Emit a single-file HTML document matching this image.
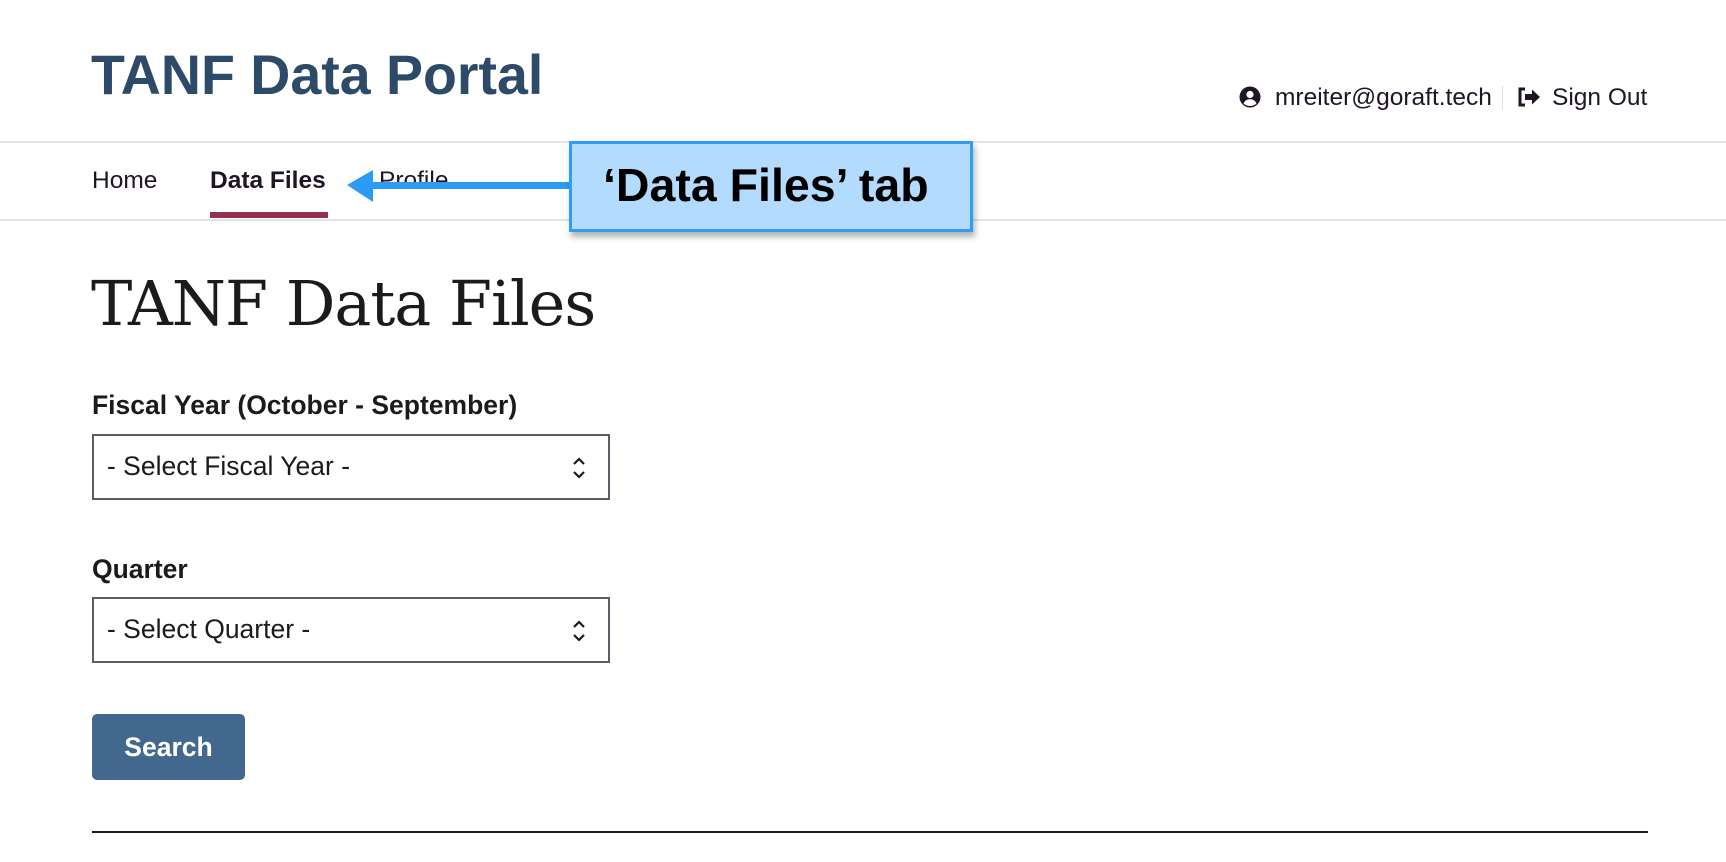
<!DOCTYPE html>
<html><head><meta charset="utf-8"><style>
body{margin:0;width:1726px;height:862px;background:#fff;position:relative;overflow:hidden;font-family:"Liberation Sans",Arial,sans-serif;color:#1b1b1b}
.a{position:absolute;white-space:nowrap}
</style></head><body>
<div class="a" style="left:91px;top:43px;font-size:55.5px;font-weight:bold;color:#2d4a68;line-height:64px">TANF Data Portal</div>
<svg class="a" style="left:1239px;top:86px" width="22" height="22" viewBox="0 0 22 22"><circle cx="11" cy="11" r="10.5" fill="#1f1525"/><circle cx="11" cy="8.5" r="3.6" fill="#fff"/><path d="M4.5 17.5c1.5-3 3.8-4.2 6.5-4.2s5 1.2 6.5 4.2c-1.8 1.6-4 2.5-6.5 2.5s-4.7-.9-6.5-2.5z" fill="#fff"/></svg>
<div class="a" style="left:1275px;top:83px;font-size:24.5px;color:#1f1525;line-height:30px">mreiter@goraft.tech</div>
<div class="a" style="left:1502px;top:86px;width:1px;height:24px;background:#ddd"></div>
<svg class="a" style="left:1516px;top:86px" width="26" height="22" viewBox="0 0 26 22"><path d="M9 3H4v16h5" fill="none" stroke="#1f1525" stroke-width="3"/><path d="M9 8h7V3.5l8 7.5-8 7.5V14H9z" fill="#1f1525"/></svg>
<div class="a" style="left:1552px;top:83px;font-size:24.5px;color:#1f1525;line-height:30px">Sign Out</div>
<div class="a" style="left:0;top:141px;width:1726px;height:2px;background:#e4e4e4"></div>
<div class="a" style="left:0;top:219px;width:1726px;height:2px;background:#e4e4e4"></div>
<div class="a" style="left:92px;top:166px;font-size:24.5px;color:#1f1525;line-height:30px">Home</div>
<div class="a" style="left:210px;top:166px;font-size:24.5px;font-weight:bold;color:#1f1525;line-height:30px">Data Files</div>
<div class="a" style="left:210px;top:212px;width:118px;height:6px;background:#96304f"></div>
<div class="a" style="left:379px;top:166px;font-size:24.5px;color:#1f1525;line-height:30px">Profile</div>
<svg class="a" style="left:340px;top:165px" width="235" height="45"><path d="M7 20 L33 5 L33 17 L232 17 L232 24 L33 24 L33 37 Z" fill="#2c9bf5"/></svg>
<div class="a" style="left:569px;top:141px;width:398px;height:85px;background:#b3dbfd;border:3px solid #2f9cf5;box-shadow:2px 5px 6px rgba(0,0,0,.3)"></div>
<div class="a" style="left:603px;top:158px;font-size:46.5px;font-weight:bold;color:#000;line-height:54px">‘Data Files’ tab</div>
<div class="a" style="left:91px;top:264px;font-family:'DejaVu Serif','Liberation Serif',serif;font-size:62px;color:#1b1b1b;line-height:80px;letter-spacing:-1px">TANF Data Files</div>
<div class="a" style="left:92px;top:389px;font-size:26.5px;font-weight:bold;line-height:32px">Fiscal Year (October - September)</div>
<div class="a" style="left:92px;top:434px;width:514px;height:62px;border:2px solid #5c5c68"></div>
<div class="a" style="left:107px;top:450px;font-size:26.5px;line-height:32px">- Select Fiscal Year -</div>
<div class="a" style="left:92px;top:553px;font-size:26.5px;font-weight:bold;line-height:32px">Quarter</div>
<div class="a" style="left:92px;top:597px;width:514px;height:62px;border:2px solid #5c5c68"></div>
<div class="a" style="left:107px;top:613px;font-size:26.5px;line-height:32px">- Select Quarter -</div>
<svg class="a" style="left:571px;top:456px" width="16" height="24"><path d="M3 8l5-5 5 5M3 16l5 5 5-5" fill="none" stroke="#1b1b1b" stroke-width="2.2"/></svg>
<svg class="a" style="left:571px;top:619px" width="16" height="24"><path d="M3 8l5-5 5 5M3 16l5 5 5-5" fill="none" stroke="#1b1b1b" stroke-width="2.2"/></svg>
<div class="a" style="left:92px;top:714px;width:153px;height:66px;background:#42688d;border-radius:5px;color:#fff;font-size:26.5px;font-weight:bold;text-align:center;line-height:66px">Search</div>
<div class="a" style="left:92px;top:831px;width:1556px;height:2px;background:#1b1b1b"></div>
</body></html>
